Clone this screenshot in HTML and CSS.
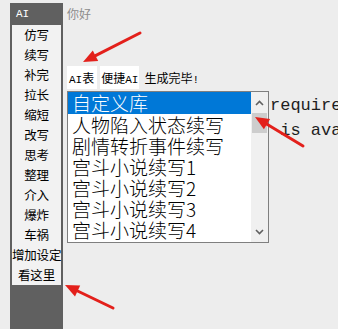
FILE: index.html
```html
<!DOCTYPE html>
<html>
<head>
<meta charset="utf-8">
<link rel="stylesheet" href="styles.css">
</head>
<body>
<div class="app">
  <aside class="sidebar">
    <div class="side-head">AI</div>
    <ul class="side-menu">
      <li>仿写</li>
      <li>续写</li>
      <li>补完</li>
      <li>拉长</li>
      <li>缩短</li>
      <li>改写</li>
      <li>思考</li>
      <li>整理</li>
      <li>介入</li>
      <li>爆炸</li>
      <li>车祸</li>
      <li>增加设定</li>
      <li>看这里</li>
    </ul>
  </aside>
  <main class="main">
    <div class="greet">你好</div>
    <div class="toolbar">
      <span class="tab tab-a"><span class="latin">AI</span>表</span>
      <span class="tab tab-b">便捷<span class="latin">AI</span></span>
      <span class="status">生成完毕<span class="latin">!</span></span>
    </div>
    <div class="work">
      <div class="listbox">
        <ul class="items">
          <li class="sel">自定义库</li>
          <li>人物陷入状态续写</li>
          <li>剧情转折事件续写</li>
          <li>宫斗小说续写1</li>
          <li>宫斗小说续写2</li>
          <li>宫斗小说续写3</li>
          <li>宫斗小说续写4</li>
          <li>宫斗小说续写5</li>
        </ul>
        <div class="scrollbar">
          <span class="sb-btn">
            <svg width="9" height="6" viewBox="0 0 9 6"><path d="M1 5 L4.5 1.5 L8 5" fill="none" stroke="#606060" stroke-width="1.6"/></svg>
          </span>
          <span class="thumb"></span>
          <span class="sb-fill"></span>
          <span class="sb-btn">
            <svg width="9" height="6" viewBox="0 0 9 6"><path d="M1 1 L4.5 4.5 L8 1" fill="none" stroke="#606060" stroke-width="1.6"/></svg>
          </span>
        </div>
      </div>
      <pre class="behind">require
 is ava</pre>
    </div>
  </main>
</div>
<svg class="arrows" width="338" height="329" viewBox="0 0 338 329">
  <g stroke="#e3201b" stroke-width="3" stroke-linecap="round" fill="#e3201b">
    <line x1="140" y1="33" x2="95.5" y2="55.7"/>
    <polygon stroke="none" points="83,62 98.2,61 92.8,50.4"/>
    <line x1="303" y1="146" x2="267" y2="124.2"/>
    <polygon stroke="none" points="255,117 263.9,129.3 270.1,119.1"/>
    <line x1="113" y1="308" x2="77.6" y2="291"/>
    <polygon stroke="none" points="65,285 75,296.5 80.2,285.6"/>
  </g>
</svg>
</body>
</html>
```

FILE: styles.css
```css
html, body {
  margin: 0;
  padding: 0;
}

body {
  background: #ededed;
  height: 329px;
  overflow: hidden;
  position: relative;
  font-family: "Noto Sans CJK SC", "Liberation Sans", sans-serif;
  color: #000;
}

.app {
  display: flex;
  height: 329px;
}

.sidebar {
  margin: 3px 0 0 10px;
  width: 53px;
  background: #606060;
  display: flex;
  flex-direction: column;
}

.side-head {
  height: 22px;
  line-height: 22px;
  padding-left: 6px;
  color: #fff;
  font-family: "Liberation Mono", monospace;
  font-size: 11px;
}

.side-menu {
  list-style: none;
  margin: 0 2px;
  padding: 0;
  background: #f2f2f2;
}

.side-menu li {
  height: 20px;
  line-height: 20px;
  text-align: center;
  font-size: 12.5px;
  white-space: nowrap;
  letter-spacing: -0.2px;
}

.main {
  margin-left: 4px;
  display: flex;
  flex-direction: column;
  flex: 1;
  min-width: 0;
}

.greet {
  margin-top: 6px;
  height: 16px;
  line-height: 16px;
  font-size: 12px;
  color: #8c8c8c;
}

.toolbar {
  margin-top: 44px;
  height: 23px;
  display: flex;
  align-items: center;
  gap: 3px;
}

.tab {
  background: #fff;
  height: 23px;
  line-height: 23px;
  font-size: 12px;
}

.latin {
  font-family: "Liberation Mono", monospace;
  font-size: 11px;
}

.tab-a {
  padding: 0 3px 0 2px;
}

.tab-b {
  padding: 0 1px;
}

.status {
  margin-left: 2px;
  font-size: 12px;
}

.work {
  margin-top: 2px;
  display: flex;
}

.listbox {
  flex: none;
  width: 200px;
  height: 150px;
  border: 1px solid #7f7f7f;
  background: #fff;
  display: flex;
  overflow: hidden;
}

.items {
  flex: 1;
  list-style: none;
  margin: 0;
  padding: 0;
  overflow: hidden;
}

.items li {
  height: 21px;
  line-height: 21px;
  padding-left: 4px;
  font-size: 19px;
  font-weight: 300;
  white-space: nowrap;
}

.items li.sel {
  background: #0078d7;
  color: #fff;
  height: 22px;
  line-height: 22px;
}

.scrollbar {
  width: 17px;
  background: #f0f0f0;
  display: flex;
  flex-direction: column;
  align-items: center;
}

.sb-btn {
  height: 21px;
  display: flex;
  align-items: center;
  justify-content: center;
}

.thumb {
  width: 15px;
  height: 20px;
  background: #cdcdcd;
}

.sb-fill {
  flex: 1;
}

.behind {
  margin: 0;
  padding: 2px 0 0 1px;
  font-family: "Liberation Mono", monospace;
  font-size: 17px;
  line-height: 25px;
  color: #1e1e1e;
  white-space: pre;
}

.arrows {
  position: absolute;
  left: 0;
  top: 0;
  pointer-events: none;
}
```
